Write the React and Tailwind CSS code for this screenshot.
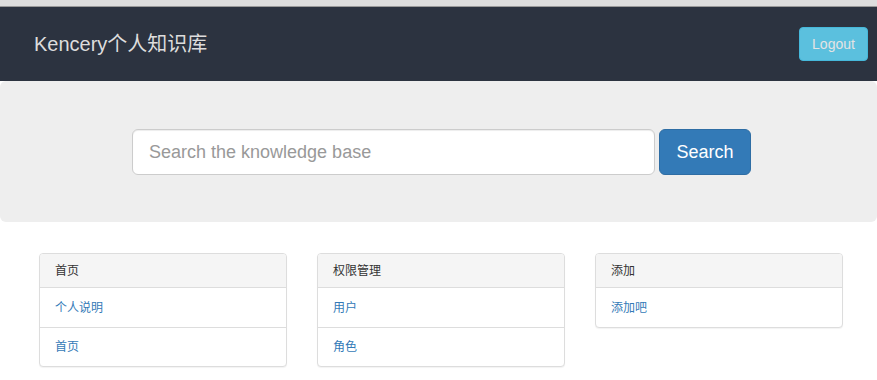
const panels = [
  { title: '首页', links: ['个人说明', '首页'] },
  { title: '权限管理', links: ['用户', '角色'] },
  { title: '添加', links: ['添加吧'] },
];

function Panel({ title, links }) {
  return (
    <div className="rounded-[4px] border border-[#ddd] bg-white shadow-[0_1px_1px_rgba(0,0,0,0.05)] overflow-hidden">
      <div className="h-[34px] flex items-center px-[15px] bg-[#f5f5f5] border-b border-[#ddd] text-[12px] text-[#333]">
        {title}
      </div>
      {links.map((l, i) => (
        <div
          key={l}
          className={
            'h-[39px] flex items-center px-[15px] text-[12px] text-[#337ab7]' +
            (i > 0 ? ' border-t border-[#ddd]' : '')
          }
        >
          <a href="#">{l}</a>
        </div>
      ))}
    </div>
  );
}

export default function App() {
  return (
    <div
      className="min-h-[380px] bg-white"
      style={{ fontFamily: '"Liberation Sans", Arial, "Noto Sans CJK SC", sans-serif' }}
    >
      <div className="h-[7px] bg-[#dddddd] border-b border-[#999]" />
      <header className="h-[74px] bg-[#2c3340] flex items-center justify-between pl-[34px] pr-[9px]">
        <span className="text-[20px] text-[#dddddd] leading-none">Kencery个人知识库</span>
        <button className="h-[34px] w-[69px] rounded-[4px] bg-[#5bc0de] border border-[#46b8da] text-[14px] text-[#e4e4e4]">
          Logout
        </button>
      </header>
      <section className="h-[141px] bg-[#eeeeee] rounded-[6px] flex items-center justify-center pl-[6px]">
        <div className="flex gap-[4px] pt-[1px]">
          <input
            placeholder="Search the knowledge base"
            className="w-[523px] h-[46px] rounded-[6px] border border-[#ccc] bg-white px-[16px] text-[18px] placeholder:text-[#999] outline-none shadow-[inset_0_1px_1px_rgba(0,0,0,0.075)]"
          />
          <button className="w-[92px] h-[46px] rounded-[6px] bg-[#337ab7] border border-[#2e6da4] text-white text-[18px]">
            Search
          </button>
        </div>
      </section>
      <main className="pt-[31px] px-[39px] grid grid-cols-[248px_248px_248px] gap-x-[30px] items-start">
        {panels.map((p) => (
          <Panel key={p.title} {...p} />
        ))}
      </main>
    </div>
  );
}
